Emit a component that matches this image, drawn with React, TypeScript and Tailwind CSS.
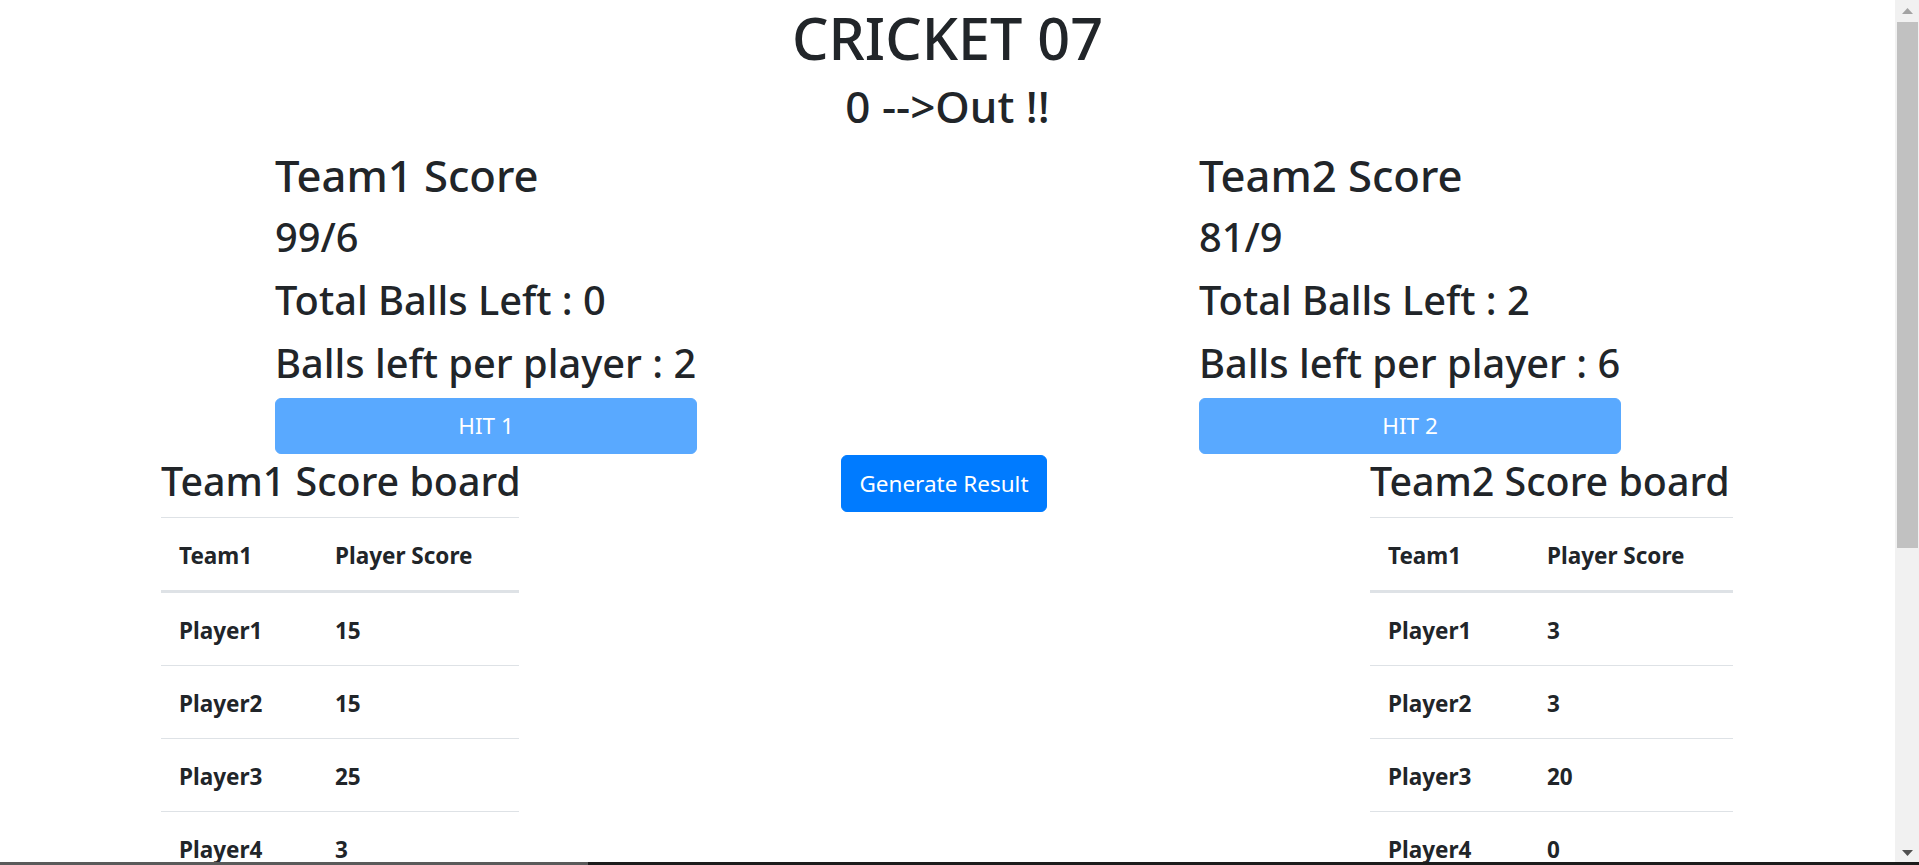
import React from 'react';

type Row = [string, number];

const team1: Row[] = [
  ['Player1', 15], ['Player2', 15], ['Player3', 25], ['Player4', 3], ['Player5', 12],
  ['Player6', 0], ['Player7', 18], ['Player8', 4], ['Player9', 7], ['Player10', 0],
];

const team2: Row[] = [
  ['Player1', 3], ['Player2', 3], ['Player3', 20], ['Player4', 0], ['Player5', 14],
  ['Player6', 9], ['Player7', 22], ['Player8', 1], ['Player9', 6], ['Player10', 3],
];

const TeamPanel = ({ name, score, balls, perPlayer, hit }: { name: string; score: string; balls: number; perPlayer: number; hit: string }) => (
  <div className="flex w-[422px] flex-col font-medium">
    <h2 className="text-[43.6px] leading-[60px]">{name} Score</h2>
    <h3 className="text-[39.8px] leading-[63px]">{score}</h3>
    <h3 className="text-[39.8px] leading-[63px]">Total Balls Left : {balls}</h3>
    <h3 className="text-[39.8px] leading-[63px] whitespace-nowrap">Balls left per player : {perPlayer}</h3>
    <button className="mt-[4px] h-[56px] w-full rounded-[6px] border border-[#59a9ff] bg-[#59a9ff] text-[22.5px] font-normal text-white">
      {hit}
    </button>
  </div>
);

const ScoreBoard = ({ title, rows, width, firstCol }: { title: string; rows: Row[]; width: string; firstCol: string }) => (
  <div className={width}>
    <h3 className="whitespace-nowrap text-[39.4px] font-medium leading-[55px]">{title}</h3>
    <table className="mt-[8px] w-full border-collapse text-left text-[22.5px] font-bold leading-[36px]">
      <thead>
        <tr>
          <th className={`${firstCol} border-t border-b-[3px] border-[#dee2e6] px-[18px] pt-[20px] pb-[16px]`}>Team1</th>
          <th className="border-t border-b-[3px] border-[#dee2e6] px-[18px] pt-[20px] pb-[16px]">Player Score</th>
        </tr>
      </thead>
      <tbody>
        {rows.map(([p, s]) => (
          <tr key={p}>
            <td className="border-t border-[#dee2e6] px-[18px] pt-[20px] pb-[16px]">{p}</td>
            <td className="border-t border-[#dee2e6] px-[18px] pt-[20px] pb-[16px]">{s}</td>
          </tr>
        ))}
      </tbody>
    </table>
  </div>
);

export default function App() {
  return (
    <div className="bg-white font-['Noto_Sans','Open_Sans','Liberation_Sans',sans-serif] text-[#212529]">
      <div className="w-[1895px] pb-10">
        <div className="text-center font-medium">
          <h1 className="text-[57.5px] leading-[76px]">CRICKET 07</h1>
          <h3 className="mt-[2px] text-[44px] leading-[56px]">0 --&gt;Out !!</h3>
        </div>

        <div className="mt-[11px] flex gap-[502px] pl-[275px]">
          <TeamPanel name="Team1" score="99/6" balls={0} perPlayer={2} hit="HIT 1" />
          <TeamPanel name="Team2" score="81/9" balls={2} perPlayer={6} hit="HIT 2" />
        </div>

        <div className="flex items-start pl-[161px]">
          <ScoreBoard title="Team1 Score board" rows={team1} width="w-[358px]" firstCol="w-[156px]" />
          <button className="ml-[322px] mt-[1px] h-[57px] w-[206px] rounded-[6px] border border-[#007bff] bg-[#007bff] text-[22.5px] text-white">
            Generate Result
          </button>
          <div className="ml-[323px]">
            <ScoreBoard title="Team2 Score board" rows={team2} width="w-[363px]" firstCol="w-[159px]" />
          </div>
        </div>
      </div>

      {/* window scrollbar */}
      <div className="fixed right-0 top-0 z-10 flex h-full w-[24px] flex-col items-center bg-[#f1f1f1]">
        <div className="flex h-[22px] w-full items-center justify-center">
          <svg width="11" height="6" viewBox="0 0 11 6">
            <path d="M0 6 L5.5 0 L11 6 Z" fill="#a3a3a3" />
          </svg>
        </div>
        <div className="h-[526px] w-[21px] bg-[#c1c1c1]" />
        <div className="flex-1" />
        <div className="flex h-[24px] w-full items-center justify-center">
          <svg width="11" height="6" viewBox="0 0 11 6">
            <path d="M0 0 L11 0 L5.5 6 Z" fill="#505050" />
          </svg>
        </div>
      </div>

      {/* taskbar edge at the bottom of the window */}
      <div className="fixed bottom-0 left-0 right-0 z-20 flex h-[3px]">
        <div className="w-[588px] bg-[#5a5a5a]" />
        <div className="flex-1 bg-[#1c1c1c]" />
      </div>
    </div>
  );
}
